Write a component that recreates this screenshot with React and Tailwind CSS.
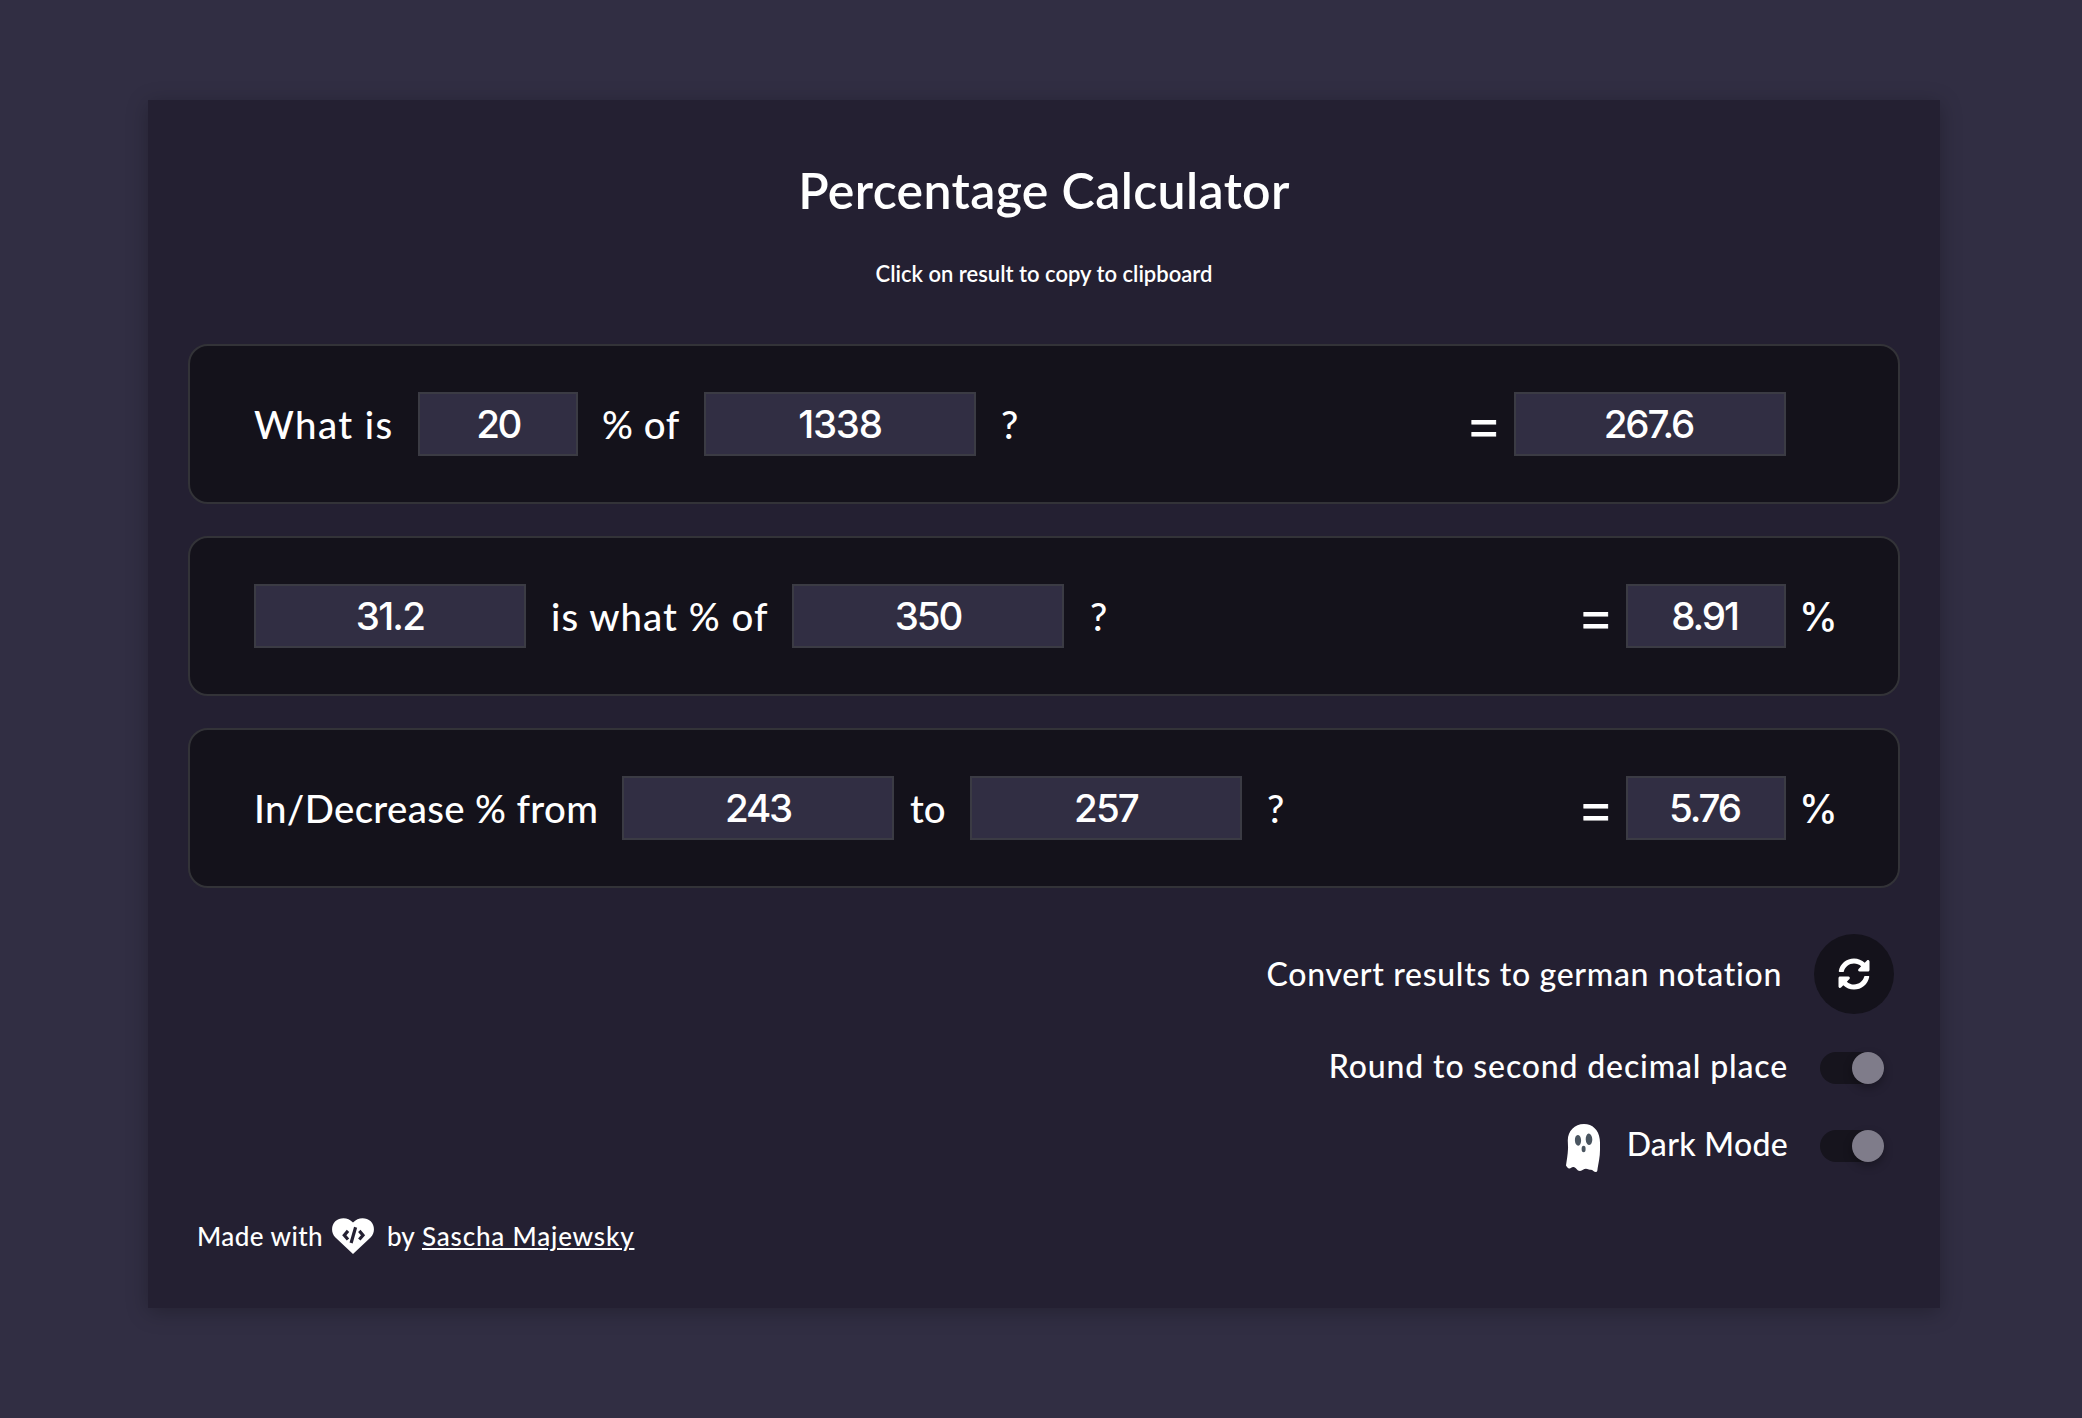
import React from "react";
import { FaSyncAlt } from "react-icons/fa";

function Row({ children }) {
  return (
    <section className="flex h-40 items-center justify-between rounded-[20px] border-2 border-[#333338] bg-[#14121b] px-16 text-[38.4px] leading-none font-medium">
      {children}
    </section>
  );
}

function Field({ value, wide, track }) {
  return (
    <input
      readOnly
      value={value}
      className={`h-16 shrink-0 border-2 border-[#3b3b44] bg-[#312e43] p-0 text-center font-['Inter',sans-serif] text-[38.5px] font-medium outline-none ${track} ${wide ? "w-[272px]" : "w-40"}`}
    />
  );
}

function Result({ value, wide, track, percent }) {
  return (
    <div className="flex items-center">
      <span className="mt-1.5 mr-4 font-['Liberation_Sans',sans-serif] text-[49px] font-normal [-webkit-text-stroke:0.8px_white]">=</span>
      <Field value={value} wide={wide} track={`${track} pr-[3px]`} />
      <span className="w-12 pl-[13px] font-['Inter',sans-serif] text-[39px]">{percent ? "%" : ""}</span>
    </div>
  );
}

function Toggle() {
  return (
    <span className="flex h-8 w-16 justify-end rounded-full bg-[#16141d]">
      <span className="h-8 w-8 rounded-full bg-[#7f7c8a] shadow-[0_4px_10px_rgba(0,0,0,0.3)]" />
    </span>
  );
}

function Ghost() {
  return (
    <svg className="mt-1 h-12 w-[34px]" viewBox="0 0 34 48">
      <path
        fill="#fff"
        d="M18 0C8.500 0 2 7 1.800 16C1.700 19 2.200 22 2 25C1.800 31 .7 36 0 41.500C.8 43 2.200 44.800 3.500 44.500C5 44.200 5.600 42.800 7.500 43C10 43.200 11 47 14 47C16.500 47 17.500 44.800 20 44.800C22 44.800 22.500 46 24.500 45.700C26.500 45.400 28 48 29.800 48C31.500 48 31.300 46.500 31.600 44.500C32.500 39 34 33 34 26C34 22 34.200 19 33.700 15C32.700 6 26.500 0 18 0Z"
      />
      <ellipse cx="12" cy="16.300" rx="3.100" ry="5.400" fill="#4a5560" transform="rotate(-3 12 16.300)" />
      <ellipse cx="23" cy="15.300" rx="3.300" ry="5.700" fill="#4a5560" transform="rotate(-3 23 15.300)" />
      <ellipse cx="17.600" cy="25" rx="2" ry="3.200" fill="#4a5560" />
    </svg>
  );
}

function CodeHeart() {
  return (
    <svg className="h-9 w-[42px]" viewBox="0 0 42 36">
      <path
        fill="#fff"
        d="M21 36L3.200 19.200C-1 15 -1 7.500 3.300 3.300C8 -1.100 16 -1.100 21 4.500C26 -1.100 34 -1.100 38.700 3.300C43 7.500 43 15 38.800 19.200Z"
      />
      <g fill="none" stroke="#242032" strokeWidth="3.200">
        <path d="M23.600 9.300L19.100 25" />
        <path d="M16 12.900L12.300 17.200L16 21.500" />
        <path d="M27.300 12.900L31 17.200L27.300 21.500" />
      </g>
    </svg>
  );
}

export default function App() {
  return (
    <div className="h-[1418px] w-[2082px] overflow-hidden bg-[#312e43] pt-[100px] pl-[148px] font-['Lato',sans-serif] text-white">
      <main className="h-[1208px] w-[1792px] bg-[#242032] px-10 pt-[60px] shadow-[0_4px_20px_rgba(0,0,0,0.25)]">
        <h1 className="text-center text-[50px] leading-[60px] font-semibold tracking-[0.37px]">Percentage Calculator</h1>
        <p className="mt-10 text-center text-[22px] leading-7 font-semibold">Click on result to copy to clipboard</p>

        <div className="mt-14 flex flex-col gap-8">
          <Row>
            <div className="flex items-center whitespace-nowrap">
              <span className="w-[164px] tracking-[1.4px]">What is</span>
              <Field value="20" track="tracking-[-2.500px]" />
              <span className="w-[126px] pl-6 tracking-[0.6px]">% of</span>
              <Field value="1338" wide track="tracking-[-1.200px]" />
              <span className="pl-[25px]">?</span>
            </div>
            <Result value="267.6" wide track="tracking-[-2.100px]" />
          </Row>
          <Row>
            <div className="flex items-center whitespace-nowrap">
              <Field value="31.2" wide track="tracking-[-1.800px]" />
              <span className="w-[266px] pl-[25px] tracking-[1.07px]">is what % of</span>
              <Field value="350" wide track="tracking-[-2.100px]" />
              <span className="pl-[26px]">?</span>
            </div>
            <Result value="8.91" percent track="tracking-[-2.100px]" />
          </Row>
          <Row>
            <div className="flex items-center whitespace-nowrap">
              <span className="w-[368px] tracking-[0.36px]">In/Decrease % from</span>
              <Field value="243" wide track="tracking-[-2.100px]" />
              <span className="w-[76px] pl-4">to</span>
              <Field value="257" wide track="tracking-[-1.900px]" />
              <span className="pl-[25px]">?</span>
            </div>
            <Result value="5.76" percent track="tracking-[-2.100px]" />
          </Row>
        </div>

        <div className="mt-[46px] flex flex-col items-end text-[32px] leading-none font-medium">
          <div className="mr-1.5 flex items-center">
            <span className="mr-8 tracking-[0.68px]">Convert results to german notation</span>
            <button className="flex h-20 w-20 items-center justify-center rounded-full bg-[#14121b]">
              <FaSyncAlt className="h-8 w-8" />
            </button>
          </div>
          <div className="mt-[38px] mr-4 flex h-8 items-center">
            <span className="mr-8 pb-1 tracking-[0.84px]">Round to second decimal place</span>
            <Toggle />
          </div>
          <div className="mt-[46px] mr-4 flex h-8 items-center">
            <Ghost />
            <span className="mr-8 ml-[27px] pb-1 tracking-[0.3px]">Dark Mode</span>
            <Toggle />
          </div>
        </div>

        <footer className="mt-14 ml-[9px] flex h-9 items-center text-[26px] leading-none font-medium">
          <span className="w-[135px] tracking-[0.44px]">Made with</span>
          <CodeHeart />
          <span className="ml-[13px] w-[35px]">by</span>
          <a className="tracking-[0.82px] underline decoration-2 underline-offset-2">Sascha Majewsky</a>
        </footer>
      </main>
    </div>
  );
}
